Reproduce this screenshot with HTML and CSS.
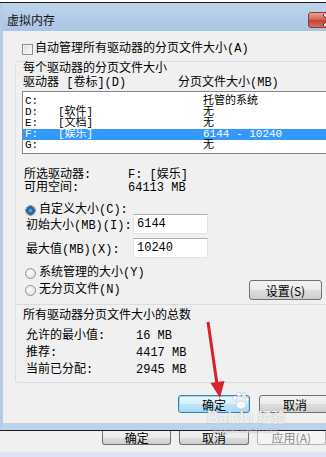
FILE: index.html
```html
<!DOCTYPE html>
<html lang="zh-CN">
<head>
  <meta charset="UTF-8" />
  <meta name="viewport" content="width=device-width, initial-scale=1.0"/>
  <title>虚拟内存</title>
  <link rel="stylesheet" href="styles.css">
</head>
<body>
  <div class="behind-top"></div>

  <div class="dialog">
    <div class="titlebar">
      <span class="title">虚拟内存</span>
      <span class="close">
        <svg width="14" height="12" viewBox="0 0 14 12">
          <path d="M2 1 L12 11 M12 1 L2 11" stroke="#6b2a25" stroke-width="4" stroke-linecap="round"/>
          <path d="M2 1 L12 11 M12 1 L2 11" stroke="#fff" stroke-width="2" stroke-linecap="round"/>
        </svg>
      </span>
    </div>

    <div class="client">
      <div class="check-row"><span class="checkbox"></span>自动管理所有驱动器的分页文件大小(A)</div>

      <div class="group group-drives">
        <div class="group-title">每个驱动器的分页文件大小</div>
        <div class="list-head"><span>驱动器 [卷标](D)</span><span>分页文件大小(MB)</span></div>
        <div class="listbox">
          <div class="list-row"><span>C:</span><span></span><span>托管的系统</span></div>
          <div class="list-row"><span>D:</span><span>[软件]</span><span>无</span></div>
          <div class="list-row"><span>E:</span><span>[文档]</span><span>无</span></div>
          <div class="list-row selected"><span>F:</span><span>[娱乐]</span><span>6144 - 10240</span></div>
          <div class="list-row"><span>G:</span><span></span><span>无</span></div>
        </div>

        <div class="info">
          <div class="info-row"><span>所选驱动器:</span><span>F: [娱乐]</span></div>
          <div class="info-row"><span>可用空间:</span><span>64113 MB</span></div>
        </div>

        <div class="radio-row first"><span class="radio checked"></span>自定义大小(C):</div>
        <div class="size-row first"><span>初始大小(MB)(I):</span><span class="textbox">6144</span></div>
        <div class="size-row"><span>最大值(MB)(X):</span><span class="textbox">10240</span></div>
        <div class="radio-row system"><span class="radio"></span>系统管理的大小(Y)</div>
        <div class="last-row">
          <div class="radio-row"><span class="radio"></span>无分页文件(N)</div>
          <span class="button set-btn">设置(S)</span>
        </div>
      </div>

      <div class="group group-total">
        <div class="group-title">所有驱动器分页文件大小的总数</div>
        <div class="totals">
          <div class="total-row"><span>允许的最小值:</span><span>16 MB</span></div>
          <div class="total-row"><span>推荐:</span><span>4417 MB</span></div>
          <div class="total-row"><span>当前已分配:</span><span>2945 MB</span></div>
        </div>
      </div>

      <div class="dialog-buttons">
        <span class="button default">确定</span>
        <span class="button">取消</span>
      </div>
    </div>
  </div>

  <div class="behind-bottom">
    <div class="behind-buttons">
      <span class="button cut">确定</span>
      <span class="button cut">取消</span>
      <span class="button cut disabled">应用(A)</span>
    </div>
    <div class="footer-strip"></div>
  </div>

  <!-- red arrow drawn over the screenshot -->
  <svg class="arrow" width="326" height="457" viewBox="0 0 326 457">
    <line x1="208" y1="322" x2="217" y2="384" stroke="#d8232c" stroke-width="3"/>
    <polygon points="220,398 224.5,381 210.5,383" fill="#d8232c"/>
  </svg>

  <div class="watermark">
    <div class="wm-logo">
      <span class="wm-bai">Bai</span>
      <svg class="wm-paw" width="18" height="22" viewBox="0 0 18 22">
        <circle cx="4" cy="6" r="2.3"/>
        <circle cx="8" cy="2.6" r="2.3"/>
        <circle cx="13" cy="3" r="2.3"/>
        <circle cx="16" cy="7.5" r="2"/>
        <ellipse cx="10" cy="13" rx="5" ry="4"/>
      </svg>
      <span class="wm-du">du</span>
      <span class="wm-jy">经验</span>
    </div>
    <div class="wm-url">jingyan.baidu.com</div>
  </div>
</body>
</html>
```

FILE: styles.css
```css
:root {
  --face: #f0f0f0;
  --frame: #b9d1ea;
  --group-line: #d5dfe5;
  --select: #3399ff;
}

* {
  box-sizing: border-box;
}

html, body {
  margin: 0;
}

body {
  width: 326px;
  height: 457px;
  overflow: hidden;
  position: relative;
  background: var(--face);
  font-family: "Liberation Mono", "Noto Sans CJK SC", monospace;
  font-size: 12px;
  color: #000;
}

.behind-top {
  height: 3px;
  background: #fff;
  border-bottom: 1px solid #1b1b1b;
}

.dialog {
  width: 345px;
  border-left: 3px solid #b3cbe6;
  border-bottom: 7px solid #bcd3ea;
}

.titlebar {
  height: 28px;
  display: flex;
  justify-content: space-between;
  align-items: flex-start;
  padding-left: 4px;
  background: linear-gradient(#bfd4eb, #aac5e3);
}

.title {
  margin-top: 9px;
  line-height: 16px;
  font-family: "Noto Sans CJK SC", sans-serif;
  color: #111;
}

.close {
  margin-top: 9px;
  margin-right: -6px;
  width: 43px;
  height: 16px;
  display: flex;
  align-items: center;
  justify-content: center;
  border: 1px solid #8a3b34;
  border-radius: 3px 0 0 3px;
  background: linear-gradient(#e8a493, #d2604f 50%, #c2402f 51%, #d0755f);
}

.client {
  background: var(--face);
  padding: 10px 8px 10px 12px;
}

.check-row {
  display: flex;
  align-items: center;
  gap: 2px;
  height: 16px;
  line-height: 16px;
  margin-left: 7px;
}

.checkbox {
  width: 11px;
  height: 11px;
  border: 1px solid #8e8f8f;
  background: linear-gradient(135deg, #dcdcdc, #fbfbfb);
  box-shadow: inset 0 0 0 1px #f4f4f4;
}

.group {
  border: 1px solid var(--group-line);
  padding: 0 6px;
}

.group-drives {
  margin-top: 4px;
  border-radius: 3px 3px 0 0;
  padding-bottom: 4px;
}

.group-total {
  border-top: 0;
  border-radius: 0 0 3px 3px;
  padding-top: 5px;
  padding-bottom: 3px;
}

.group-title {
  height: 14px;
  line-height: 14px;
  padding-left: 1px;
}

.group-total .group-title {
  height: 13px;
  line-height: 13px;
}

.list-head {
  display: grid;
  grid-template-columns: 155px auto;
  height: 14px;
  line-height: 14px;
  padding-left: 1px;
}

.listbox {
  margin-top: 1px;
  background: #fff;
  border: 1px solid #828790;
  padding: 4px 0 2px;
}

.list-row {
  display: grid;
  grid-template-columns: 33px 145px auto;
  height: 11px;
  line-height: 11px;
  font-size: 11px;
  padding-left: 2px;
  white-space: pre;
}

.list-row.selected {
  background: var(--select);
  color: #fff;
}

.info {
  margin-top: 15px;
}

.info-row {
  display: grid;
  grid-template-columns: 104px auto;
  height: 13px;
  line-height: 13px;
  padding-left: 2px;
  white-space: pre;
}

.radio-row {
  display: flex;
  align-items: center;
  gap: 3px;
  height: 14px;
  line-height: 14px;
  padding-left: 3px;
}

.radio-row.first {
  margin-top: 8px;
}

.radio-row.system {
  margin-top: 8px;
}

.radio {
  width: 11px;
  height: 11px;
  border-radius: 50%;
  border: 1px solid #8e8f8f;
  background: radial-gradient(circle at 40% 40%, #fdfdfd, #d8d8d8);
}

.radio.checked {
  background: radial-gradient(circle, #6fc2f0 0, #2b79b8 2px, #1b4f80 4px, #e6e6e6 4.5px, #f4f4f4);
}

.size-row {
  display: grid;
  grid-template-columns: 107px 75px;
  align-items: center;
  height: 20px;
  margin-top: 4px;
  padding-left: 4px;
}

.size-row.first {
  margin-top: -3px;
}

.textbox {
  height: 20px;
  line-height: 18px;
  padding-left: 3px;
  background: #fff;
  border: 1px solid #e2e3ea;
  border-top-color: #abadb3;
}

.last-row {
  display: flex;
  justify-content: space-between;
  align-items: center;
  height: 20px;
}

.button {
  display: flex;
  align-items: center;
  justify-content: center;
  width: 72px;
  height: 18px;
  border: 1px solid #707070;
  border-radius: 3px;
  background: linear-gradient(#f2f2f2, #ebebeb 50%, #dddddd 51%, #cfcfcf);
  font-family: "Noto Sans CJK SC", "Liberation Mono", monospace;
}

.set-btn {
  width: 73px;
  height: 20px;
  margin-right: 8px;
}

.button.default {
  border-color: #3c7fb1;
  background: linear-gradient(#eaf6fd, #d9f0fc 50%, #bee6fd 51%, #a7d9f5);
  box-shadow: inset 0 0 0 1px #9fd5f1;
}

.totals {
  margin-top: 5px;
}

.total-row {
  display: grid;
  grid-template-columns: 110px auto;
  height: 17px;
  line-height: 17px;
  padding-left: 4px;
}

.dialog-buttons {
  display: flex;
  justify-content: flex-end;
  gap: 9px;
  margin-top: 12px;
  margin-right: 6px;
}

.behind-bottom {
  border-top: 1px solid #1b1b1b;
  height: 27px;
}

.behind-buttons {
  display: flex;
  gap: 8px;
  padding-left: 102px;
}

.button.cut {
  height: 14px;
  width: 73px;
  border-top: 0;
  border-radius: 0 0 3px 3px;
  line-height: 12px;
}

.button.disabled {
  color: #8a8a8a;
  border-color: #b3b6b9;
  background: #f4f4f4;
}

.footer-strip {
  margin-top: 7px;
  height: 5px;
  background: #dbe6f2;
}

.arrow {
  position: absolute;
  top: 0;
  left: 0;
  pointer-events: none;
}

.watermark {
  position: absolute;
  left: 207px;
  top: 398px;
  color: rgba(255, 255, 255, 0.85);
  text-shadow: 0 0 1px rgba(110, 110, 110, 0.6);
  pointer-events: none;
}

.wm-logo {
  display: flex;
  align-items: flex-end;
  height: 28px;
}

.wm-bai, .wm-du {
  font-family: "Liberation Sans", sans-serif;
  font-weight: bold;
  font-size: 16px;
  line-height: 16px;
}

.wm-paw {
  fill: rgba(255, 255, 255, 0.8);
  stroke: rgba(130, 130, 130, 0.45);
  stroke-width: 0.6;
  margin: 0 -16px 12px -1px;
}

.wm-du {
  margin-left: 1px;
}

.wm-jy {
  font-family: "Noto Sans CJK SC", sans-serif;
  font-weight: bold;
  font-size: 14px;
  line-height: 16px;
  margin-left: 4px;
  margin-bottom: 2px;
}

.wm-url {
  font-family: "Liberation Sans", sans-serif;
  font-size: 8px;
  line-height: 9px;
  margin-left: 6px;
  color: rgba(255, 255, 255, 0.55);
}
```
